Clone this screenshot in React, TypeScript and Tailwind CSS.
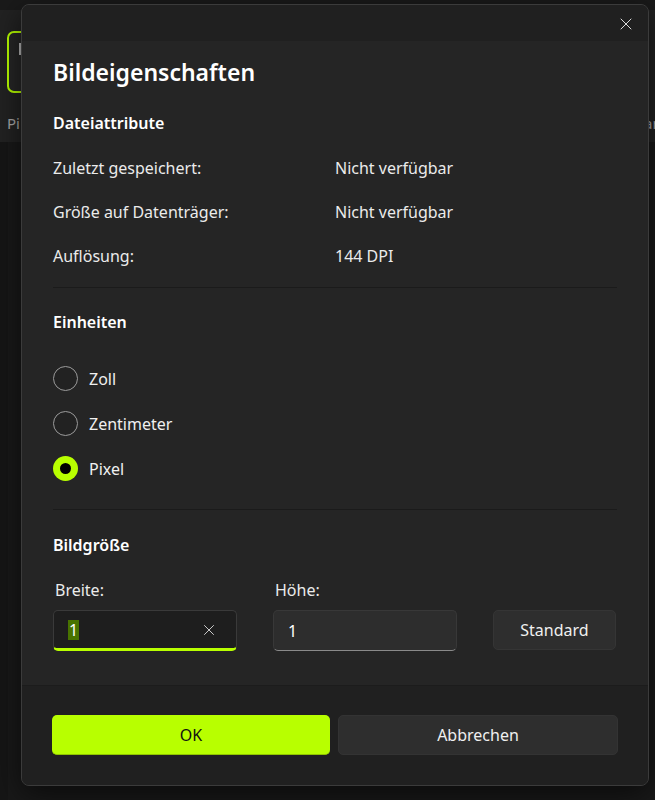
import React from 'react';
import { X } from 'lucide-react';

const font = { fontFamily: '"Noto Sans", "Open Sans", sans-serif' };

const Radio: React.FC<{ label: string; checked?: boolean }> = ({ label, checked }) => (
    <div className="h-[45px] flex items-center gap-[11px]">
        {checked ? (
            <div className="w-[25px] h-[25px] rounded-full bg-[#b8ff00] flex items-center justify-center">
                <div className="w-[11px] h-[11px] rounded-full bg-black" />
            </div>
        ) : (
            <div className="w-[25px] h-[25px] rounded-full border-[1.5px] border-[#9b9b9b] bg-[#222222]" />
        )}
        <span className="text-[16px] text-[#f0f0f0]">{label}</span>
    </div>
);

const App: React.FC = () => {
    const attrs = [
        { label: 'Zuletzt gespeichert:', value: 'Nicht verfügbar' },
        { label: 'Größe auf Datenträger:', value: 'Nicht verfügbar' },
        { label: 'Auflösung:', value: '144 DPI' },
    ];

    return (
        <div className="w-[655px] h-[800px] relative overflow-hidden bg-[#191919]" style={font}>
            {/* Paint im Hintergrund */}
            <div className="h-[142px] bg-[#1c1c1c] flex flex-col">
                <div className="h-[10px] bg-[#1a1a1a]" />
                <div className="flex-1 bg-[#222222] relative">
                    <div className="absolute left-[7px] top-[21px] w-[60px] h-[62px] rounded-[7px] border-2 border-[#b8ff00] bg-[#262626]">
                        <div className="absolute left-[10px] top-[10px] w-[2px] h-[12px] bg-[#bbbbbb]" />
                    </div>
                    <span className="absolute left-[7px] top-[102px] text-[15px] text-[#a8a8a8]">Pi</span>
                    <span className="absolute left-[644px] top-[102px] text-[15px] text-[#a8a8a8]">ar</span>
                </div>
            </div>
            <div className="absolute left-0 top-[142px] w-[8px] h-[658px] bg-[#161616]" />

            {/* Dialog */}
            <div className="absolute left-[21px] top-[4px] w-[628px] h-[782px] rounded-[8px] border border-[#3b3b3b] bg-[#252525] overflow-hidden flex flex-col shadow-[0_8px_30px_rgba(0,0,0,0.6)]">
                <div className="h-[36px] bg-[#202020] flex justify-end items-center pr-[12px] shrink-0">
                    <X size={20} strokeWidth={1.2} className="text-[#dcdcdc] mt-[1px]" />
                </div>

                <div className="flex-1 px-[31px] pt-[16px]">
                    <h1 className="text-[23px] leading-[30px] font-semibold text-white">Bildeigenschaften</h1>

                    <h2 className="mt-[25px] text-[16px] leading-[22px] font-semibold text-white">Dateiattribute</h2>
                    <div className="mt-[12px]">
                        {attrs.map((a) => (
                            <div key={a.label} className="h-[44px] flex items-center text-[16px] text-[#ebebeb]">
                                <span className="w-[282px]">{a.label}</span>
                                <span>{a.value}</span>
                            </div>
                        ))}
                    </div>
                    <div className="mt-[9px] h-px bg-[#1b1b1b]" />

                    <h2 className="mt-[23px] text-[16px] leading-[22px] font-semibold text-white">Einheiten</h2>
                    <div className="mt-[23px]">
                        <Radio label="Zoll" />
                        <Radio label="Zentimeter" />
                        <Radio label="Pixel" checked />
                    </div>
                    <div className="mt-[18px] h-px bg-[#1b1b1b]" />

                    <h2 className="mt-[24px] text-[16px] leading-[22px] font-semibold text-white">Bildgröße</h2>
                    <div className="mt-[24px] flex gap-[36px] items-end">
                        <div className="w-[184px]">
                            <div className="text-[16px] leading-[20px] text-[#ebebeb] pl-[2px]">Breite:</div>
                            <div className="mt-[10px] h-[41px] rounded-[5px] border border-[#3a3a3a] border-b-[3px] border-b-[#b8ff00] bg-[#1e1e1e] flex items-center pl-[14px] pr-[18px]">
                                <span className="bg-[#487300] text-white text-[16px] leading-[20px] px-[1px]">1</span>
                                <X size={18} strokeWidth={1.3} className="ml-auto text-[#cfcfcf]" />
                            </div>
                        </div>
                        <div className="w-[184px]">
                            <div className="text-[16px] leading-[20px] text-[#ebebeb] pl-[2px]">Höhe:</div>
                            <div className="mt-[10px] h-[41px] rounded-[5px] border border-[#383838] border-b-[#8a8a8a] bg-[#2d2d2d] flex items-center pl-[14px]">
                                <span className="text-white text-[16px]">1</span>
                            </div>
                        </div>
                        <button className="w-[123px] h-[40px] mb-[1px] rounded-[5px] bg-[#2e2e2e] border border-[#353535] text-[16px] text-[#f0f0f0]">
                            Standard
                        </button>
                    </div>
                </div>

                <div className="h-[100px] bg-[#202020] border-t border-[#1c1c1c] flex gap-[8px] px-[30px] pt-[29px] shrink-0">
                    <button className="flex-1 h-[40px] rounded-[5px] bg-[#b8ff00] border-b border-[#8fc400] text-[16px] text-[#111111]">OK</button>
                    <button className="flex-1 h-[40px] rounded-[5px] bg-[#2e2e2e] border border-[#333333] text-[16px] text-[#f0f0f0]">Abbrechen</button>
                </div>
            </div>
        </div>
    );
};

export default App;
